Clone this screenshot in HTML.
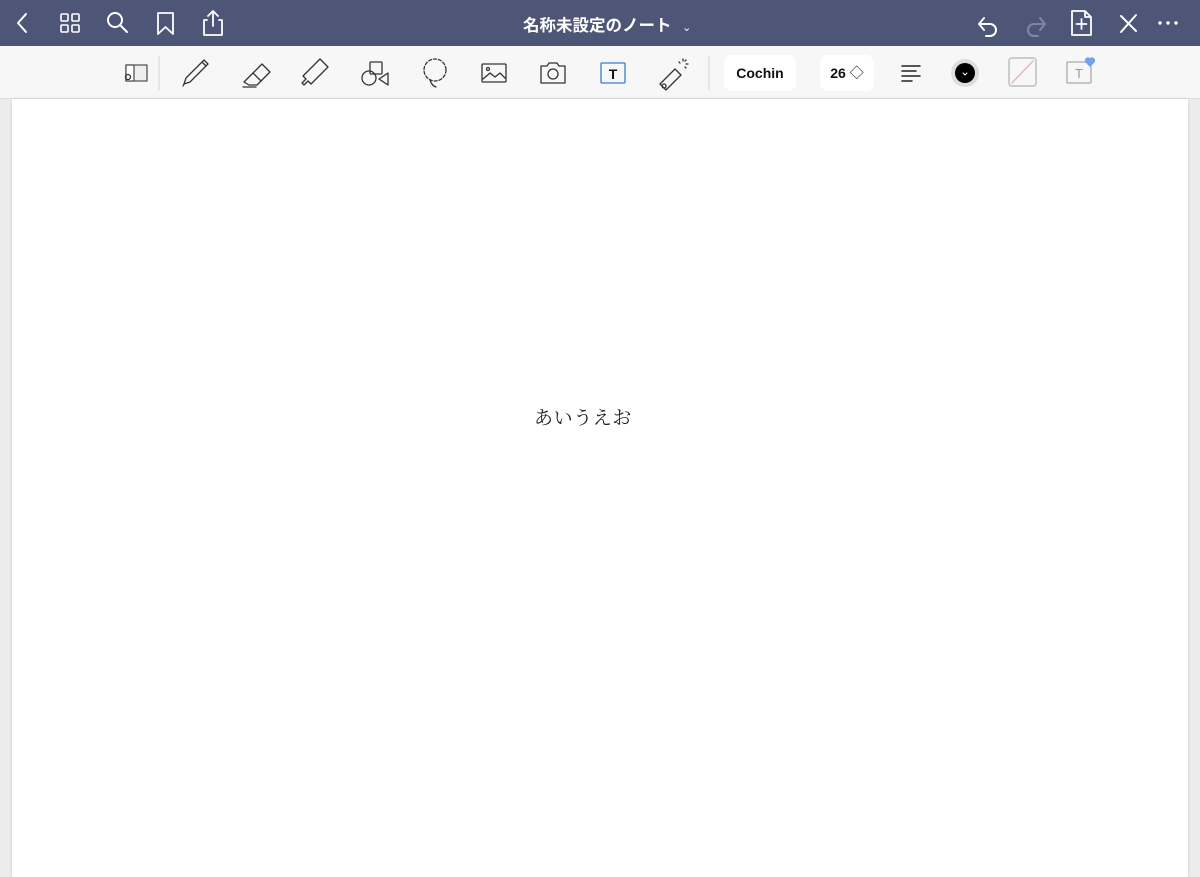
<!DOCTYPE html>
<html><head><meta charset="utf-8"><style>
body{margin:0;width:1200px;height:877px;overflow:hidden;background:#ececec;font-family:"Liberation Sans","Noto Sans CJK JP",sans-serif;position:relative}
.hdr{position:absolute;left:0;top:0;width:1200px;height:46px;background:#4d5677}
.tb{position:absolute;left:0;top:46px;width:1200px;height:52px;background:#f7f7f7;border-bottom:1px solid #dcdcdc}
.page{position:absolute;left:12px;top:99px;width:1176px;height:778px;background:#fff;box-shadow:0 0 3px #ccc}
svg{position:absolute}
.title{position:absolute;left:523px;top:12px;color:#fff;font-size:16.5px;font-weight:bold;white-space:nowrap}
.pill{position:absolute;top:55px;height:36px;background:#fff;border-radius:8px;font-size:14px;font-weight:bold;color:#111;line-height:36px;text-align:center}
.txt{position:absolute;left:534px;top:403px;font-family:"Liberation Serif","Noto Serif CJK SC",serif;font-size:19px;color:#222;letter-spacing:0.6px}
</style></head><body>
<div class="hdr"></div>
<div class="title">名称未設定のノート <span style="font-size:11px;font-weight:normal;margin-left:6px">⌄</span></div>
<svg width="1200" height="46" style="left:0;top:0" fill="none" stroke="#fff" stroke-width="2" stroke-linecap="round" stroke-linejoin="round">
<path d="M26 14 L18 23 L26 32"/>
<rect x="61" y="14" width="7" height="7" rx="1" stroke-width="1.6"/><rect x="72" y="14" width="7" height="7" rx="1" stroke-width="1.6"/><rect x="61" y="25" width="7" height="7" rx="1" stroke-width="1.6"/><rect x="72" y="25" width="7" height="7" rx="1" stroke-width="1.6"/>
<circle cx="115" cy="20" r="7"/><path d="M120 25 L127 32"/>
<path d="M158 13 H173 V34 L165.5 27 L158 34 Z" stroke-width="1.8"/>
<path d="M207 20 H204 V35 H222 V20 H219 M213 26 V11 M208 16 L213 11 L218 16" stroke-width="1.8"/>
<path d="M980 24 H990 A6 6 0 0 1 990 36 H986 M984 18 L979 24 L984 30"/>
<path d="M1044 24 H1034 A6 6 0 0 0 1034 36 H1038 M1040 18 L1045 24 L1040 30" stroke="#7d86a3"/>
<path d="M1072 11 H1085 L1091 17 V35 H1072 Z M1085 11 V17 H1091 M1081.5 19 V29 M1076.5 24 H1086.5" stroke-width="1.8"/>
<path d="M1121 16 L1136 31 M1136 15 L1121 32"/>
<circle cx="1160" cy="23" r="1.7" fill="#fff" stroke="none"/><circle cx="1168" cy="23" r="1.7" fill="#fff" stroke="none"/><circle cx="1176" cy="23" r="1.7" fill="#fff" stroke="none"/>
</svg>
<div class="tb"></div>
<svg width="1200" height="52" style="left:0;top:46px" fill="none" stroke="#333" stroke-width="1.3" stroke-linecap="round" stroke-linejoin="round">
<rect x="126" y="19" width="21" height="16" stroke="#555" fill="#eee"/><rect x="126" y="19" width="8" height="16" stroke="#555" fill="#fff"/><circle cx="128" cy="31" r="2.5"/>
<line x1="159" y1="10" x2="159" y2="44" stroke="#ddd"/>
<path d="M184 38 L186 32 L204 14 L208 18 L190 36 Z M202 16 L206 20 M184 38 L183 40"/>
<path d="M244 36 L254 26 L262 18 L270 26 L257 39 L249 39 Z M253 27 L261 35 M243 41 H256"/>
<path d="M302 37 L306 33 L303 30 L320 13 L328 21 L311 38 L308 35 L304 39 Z"/>
<circle cx="369" cy="32" r="7"/><rect x="370" y="16" width="12" height="12" rx="1"/><path d="M388 27 V39 L379 33 Z"/>
<circle cx="435" cy="24" r="11" stroke-dasharray="3 2"/><path d="M430 34 Q432 40 436 41"/>
<rect x="482" y="18" width="24" height="18" rx="1"/><circle cx="488" cy="23" r="1.5"/><path d="M483 33 L490 27 L495 31 L500 27 L505 32"/>
<path d="M541 20 H547 L549 17 H557 L559 20 H565 V37 H541 Z"/><circle cx="553" cy="28" r="5"/>
<rect x="601" y="17" width="24" height="20" rx="1" stroke="#3a7bd5"/><text x="613" y="33" text-anchor="middle" font-size="14" font-weight="bold" fill="#111" stroke="none" font-family="Liberation Sans">T</text>
<path d="M660 38 L675 23 L681 29 L666 44 Z M664 38 a2 2 0 1 0 0.1 0 M683 13 V15 M688 18 H686 M679 16 L680 17 M686 14 L685 15 M686 22 L685 21"/>
<line x1="709" y1="10" x2="709" y2="44" stroke="#ddd"/>
<path d="M902 20 H920 M902 25 H916 M902 30 H920 M902 35 H912" stroke="#222" stroke-width="1.5"/>
<circle cx="965" cy="27" r="14" fill="#ddd" stroke="none"/><circle cx="965" cy="27" r="10" fill="#000" stroke="none"/><path d="M963 27 L965 29 L967 27" stroke="#fff" stroke-width="1"/>
<rect x="1009" y="12" width="27" height="28" rx="3" stroke="#ccc" stroke-width="2"/><path d="M1012 37 L1033 15" stroke="#e5b3b3"/>
<rect x="1067" y="16" width="24" height="21" rx="1" stroke="#aaa"/><text x="1079" y="32" text-anchor="middle" font-size="13" fill="#999" stroke="none" font-family="Liberation Sans">T</text>
<path d="M1090 20 L1086 16 A2.3 2.3 0 0 1 1090 13 A2.3 2.3 0 0 1 1094 16 Z" fill="#6fa3ee" stroke="#6fa3ee"/>
</svg>
<div class="pill" style="left:724px;width:72px">Cochin</div>
<div class="pill" style="left:820px;width:54px">26 <span style="font-weight:normal">◇</span></div>
<div class="page"></div>
<div class="txt">あいうえお</div>
</body></html>
